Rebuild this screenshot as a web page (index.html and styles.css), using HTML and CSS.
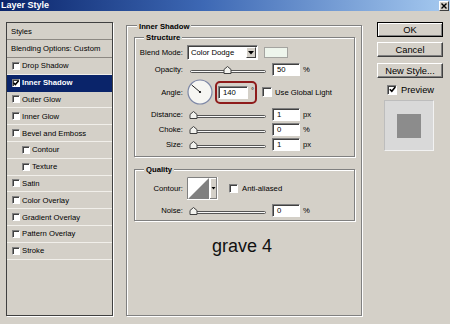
FILE: index.html
```html
<!DOCTYPE html>
<html>
<head>
<meta charset="utf-8">
<link rel="stylesheet" href="styles.css">
</head>
<body>
<div class="titlebar">
  <span class="title">Layer Style</span>
  <span class="close"><svg width="6" height="6" viewBox="0 0 6 6"><path d="M0.5 0.5L5.5 5.5M5.5 0.5L0.5 5.5" stroke="#000" stroke-width="1.4"/></svg></span>
</div>
<div class="content">
  <div class="styles-list">
    <div class="item head h1">Styles</div>
    <div class="item head h2">Blending Options: Custom</div>
    <div class="item"><span class="cb"></span>Drop Shadow</div>
    <div class="item selected"><span class="cb"><svg width="6" height="6" viewBox="0 0 6 6"><path d="M0.5 2.8L2.3 4.6L5.6 0.8" fill="none" stroke="#000" stroke-width="1.5"/></svg></span>Inner Shadow</div>
    <div class="item"><span class="cb"></span>Outer Glow</div>
    <div class="item"><span class="cb"></span>Inner Glow</div>
    <div class="item"><span class="cb"></span>Bevel and Emboss</div>
    <div class="item indent"><span class="cb"></span>Contour</div>
    <div class="item indent"><span class="cb"></span>Texture</div>
    <div class="item"><span class="cb"></span>Satin</div>
    <div class="item"><span class="cb"></span>Color Overlay</div>
    <div class="item"><span class="cb"></span>Gradient Overlay</div>
    <div class="item"><span class="cb"></span>Pattern Overlay</div>
    <div class="item"><span class="cb"></span>Stroke</div>
  </div>

  <div class="group outer">
    <div class="legend">Inner Shadow</div>
    <div class="group sub structure">
      <div class="legend">Structure</div>
      <div class="row r-blend">
        <span class="lbl">Blend Mode:</span>
        <span class="select">Color Dodge<span class="sel-btn"><svg width="6" height="4" viewBox="0 0 6 4"><path d="M0 0H6L3 3.5Z" fill="#000"/></svg></span></span>
        <span class="swatch"></span>
      </div>
      <div class="row r-opacity">
        <span class="lbl">Opacity:</span>
        <svg class="slider" width="79" height="9" viewBox="0 0 79 9"><rect x="2.5" y="5.5" width="75" height="2" rx="1" fill="#f8f8f8" stroke="#555"/><path d="M36 8.5V4.5L39.5 1.5L43 4.5V8.5Z" fill="#f2f2ee" stroke="#404040"/></svg>
        <span class="field">50</span><span class="unit">%</span>
      </div>
      <div class="row r-angle">
        <span class="lbl">Angle:</span>
        <svg class="dial" width="26" height="26" viewBox="0 0 26 26"><circle cx="13" cy="13" r="12" fill="#f6f6f2" stroke="#7d87a6" stroke-width="1.2"/><path d="M13 13L4.6 5.9" stroke="#222" stroke-width="1"/><circle cx="13" cy="13" r="1.1" fill="#000"/></svg>
        <span class="hilite"><span class="field wide">140</span><span class="deg">°</span></span>
        <span class="cb lg"></span><span class="cblbl">Use Global Light</span>
      </div>
      <div class="row r-dist">
        <span class="lbl">Distance:</span>
        <svg class="slider" width="79" height="9" viewBox="0 0 79 9"><rect x="2.5" y="5.5" width="75" height="2" rx="1" fill="#f8f8f8" stroke="#555"/><path d="M2 8.5V4.5L5.5 1.5L9 4.5V8.5Z" fill="#f2f2ee" stroke="#404040"/></svg>
        <span class="field">1</span><span class="unit">px</span>
      </div>
      <div class="row r-small">
        <span class="lbl">Choke:</span>
        <svg class="slider" width="79" height="9" viewBox="0 0 79 9"><rect x="2.5" y="5.5" width="75" height="2" rx="1" fill="#f8f8f8" stroke="#555"/><path d="M2 8.5V4.5L5.5 1.5L9 4.5V8.5Z" fill="#f2f2ee" stroke="#404040"/></svg>
        <span class="field">0</span><span class="unit">%</span>
      </div>
      <div class="row r-small">
        <span class="lbl">Size:</span>
        <svg class="slider" width="79" height="9" viewBox="0 0 79 9"><rect x="2.5" y="5.5" width="75" height="2" rx="1" fill="#f8f8f8" stroke="#555"/><path d="M2 8.5V4.5L5.5 1.5L9 4.5V8.5Z" fill="#f2f2ee" stroke="#404040"/></svg>
        <span class="field">1</span><span class="unit">px</span>
      </div>
    </div>

    <div class="group sub quality">
      <div class="legend">Quality</div>
      <div class="row r-contour">
        <span class="lbl">Contour:</span>
        <svg class="contour" width="31" height="23" viewBox="0 0 31 23"><rect x="0" y="0" width="31" height="23" fill="#fff"/><path d="M1 22L22 1V22Z" fill="#808080"/><rect x="23" y="1" width="7" height="21" fill="#d4d0c8"/><path d="M23 1.5H30" stroke="#fff"/><path d="M23.5 1V22" stroke="#fff"/><path d="M29.5 1V22.5M23 21.5H30" stroke="#808080"/><path d="M24.5 10H28.5L26.5 12.5Z" fill="#000"/><path d="M0.5 23V0.5H31" fill="none" stroke="#808080"/><path d="M0 22.5H30.5V0" fill="none" stroke="#fff"/></svg>
        <span class="cb aa"></span><span class="cblbl">Anti-aliased</span>
      </div>
      <div class="row r-noise">
        <span class="lbl">Noise:</span>
        <svg class="slider" width="79" height="9" viewBox="0 0 79 9"><rect x="2.5" y="5.5" width="75" height="2" rx="1" fill="#f8f8f8" stroke="#555"/><path d="M2 8.5V4.5L5.5 1.5L9 4.5V8.5Z" fill="#f2f2ee" stroke="#404040"/></svg>
        <span class="field">0</span><span class="unit">%</span>
      </div>
    </div>

    <div class="caption">grave 4</div>
  </div>

  <div class="side">
    <div class="btn default">OK</div>
    <div class="btn cancel">Cancel</div>
    <div class="btn newstyle">New Style...</div>
    <div class="preview-row"><span class="cb lg"><svg width="7" height="7" viewBox="0 0 7 7"><path d="M0.8 3.2L2.8 5.3L6.3 1" fill="none" stroke="#000" stroke-width="1.6"/></svg></span><span class="pv-lbl">Preview</span></div>
    <div class="preview"><span class="pv-square"></span></div>
  </div>
</div>
</body>
</html>
```

FILE: styles.css
```css
* { box-sizing: border-box; }
html, body { margin: 0; padding: 0; }
body {
  width: 450px;
  height: 324px;
  overflow: hidden;
  background: #d4d0c8;
  font-family: "Liberation Sans", Arial, sans-serif;
  font-size: 7.7px;
  color: #000;
}

.titlebar {
  height: 11px;
  background: linear-gradient(to right, #0a246a 0%, #3d68b4 45%, #a6caf0 100%);
  display: flex;
  align-items: center;
  justify-content: space-between;
}
.title {
  color: #fff;
  font-weight: bold;
  font-size: 9px;
  line-height: 11px;
  padding-left: 1px;
}
.close {
  width: 10px;
  height: 10px;
  margin-right: 1px;
  background: #d4d0c8;
  border: 1px solid;
  border-color: #fff #404040 #404040 #fff;
  display: flex;
  align-items: center;
  justify-content: center;
}

.content {
  display: flex;
  align-items: flex-start;
  padding: 11px 0 0 6px;
}

/* left list */
.styles-list {
  width: 107px;
  height: 294px;
  border: 1px solid #404040;
  box-shadow: 1px 1px 0 #fff;
  flex: none;
}
.item {
  height: 16.8px;
  display: flex;
  align-items: center;
  padding-left: 5px;
  border-bottom: 1px solid #f1efea;
  white-space: nowrap;
}
.item.head { padding-left: 4px; border-bottom: 1px solid #8c8882; }
.item.h1 { height: 17px; }
.item.h2 { height: 18px; }
.item.indent { padding-left: 15px; }
.item.selected {
  background: #0a246a;
  color: #fff;
  font-weight: bold;
  border-bottom-color: #0a246a;
}

.cb {
  width: 8px;
  height: 8px;
  background: #fff;
  border: 1px solid;
  border-color: #808080 #fff #fff #808080;
  box-shadow: inset 1px 1px 0 #404040;
  flex: none;
  margin-right: 2px;
  display: flex;
  align-items: center;
  justify-content: center;
}
.cb.lg { width: 10px; height: 10px; }

/* middle */
.group {
  border: 1px solid #808080;
  box-shadow: inset 1px 1px 0 #fff, 1px 1px 0 #fff;
}
.outer {
  width: 236px;
  height: 291px;
  margin: 3px 0 0 13px;
  padding: 0 6px 0 7px;
  flex: none;
}
.legend {
  width: fit-content;
  background: #d4d0c8;
  font-weight: bold;
  line-height: 10px;
  padding: 0 2px;
}
.outer > .legend { margin: -4px 0 0 3px; }
.sub > .legend { margin: -5px 0 0 9px; }

.sub { width: 221px; }
.structure { margin-top: 5px; height: 120px; }
.quality { margin-top: 12px; height: 52px; }

.row { display: flex; align-items: center; white-space: nowrap; }
.lbl {
  width: 48px;
  text-align: right;
  margin-right: 4px;
  flex: none;
}
.r-blend { margin-top: 2px; height: 15px; }
.r-opacity { margin-top: 3px; height: 13px; }
.r-angle { margin-top: 3px; height: 26px; }
.r-dist { margin-top: 3px; height: 13px; }
.r-small { margin-top: 2px; height: 13px; }
.r-contour { margin-top: 2px; height: 23px; }
.r-noise { margin-top: 4px; height: 13px; }

.select {
  width: 71px;
  height: 15px;
  background: #fff;
  border: 1px solid;
  border-color: #808080 #fff #fff #808080;
  box-shadow: inset 1px 1px 0 #404040;
  display: flex;
  align-items: center;
  padding-left: 3px;
}
.sel-btn {
  margin-left: auto;
  margin-right: 1px;
  width: 10px;
  height: 11px;
  background: #d4d0c8;
  border: 1px solid;
  border-color: #fff #404040 #404040 #fff;
  display: flex;
  align-items: center;
  justify-content: center;
}
.swatch {
  margin-left: 6px;
  width: 24px;
  height: 11px;
  background: #eef5ec;
  border: 1px solid #a4a4a0;
}

.slider { margin-left: 1px; flex: none; }
.field {
  margin-left: 5px;
  width: 28px;
  height: 13px;
  background: #fff;
  border: 1px solid;
  border-color: #808080 #fff #fff #808080;
  box-shadow: inset 1px 1px 0 #404040;
  padding-left: 4px;
  line-height: 11px;
  flex: none;
}
.unit { margin-left: 3px; }

.dial { flex: none; }
.hilite {
  margin-left: 2px;
  width: 42px;
  height: 23px;
  border: 2px solid #8e1b1b;
  border-radius: 5px;
  display: flex;
  align-items: center;
  flex: none;
}
.field.wide { margin-left: 1px; width: 30px; }
.deg { margin-left: 3px; align-self: flex-start; margin-top: 3px; }
.r-angle .cb { margin-left: 5px; margin-right: 3px; }
.cb.aa { margin-left: 11px; margin-right: 4px; width: 9px; height: 9px; }

.contour { flex: none; }

.caption {
  margin-top: 15px;
  padding-left: 78px;
  font-size: 18px;
  line-height: 20px;
  color: #111;
}

/* right side */
.side {
  margin-left: 15px;
  width: 66px;
  display: flex;
  flex-direction: column;
  flex: none;
}
.btn {
  width: 66px;
  height: 15px;
  font-size: 9.3px;
  background: #d4d0c8;
  border: 1px solid;
  border-color: #fff #404040 #404040 #fff;
  box-shadow: inset -1px -1px 0 #808080;
  display: flex;
  align-items: center;
  justify-content: center;
}
.btn.default {
  border: 1px solid #000;
  box-shadow: inset 1px 1px 0 #fff, inset -1px -1px 0 #808080;
}
.btn.cancel { margin-top: 5px; }
.btn.newstyle { margin-top: 6px; }

.preview-row {
  margin-top: 6px;
  height: 11px;
  padding-left: 10px;
  display: flex;
  align-items: center;
  font-size: 9.3px;
}
.preview-row .cb { margin-right: 4px; }

.preview {
  margin: 5px 0 0 7px;
  width: 50px;
  height: 51px;
  background: #d9d9d9;
  border: 1px solid;
  border-color: #bdbdbd #f2f2f2 #f2f2f2 #bdbdbd;
  display: flex;
  align-items: center;
  justify-content: center;
}
.pv-square {
  width: 24px;
  height: 24px;
  background: #8c8c8c;
}
```
